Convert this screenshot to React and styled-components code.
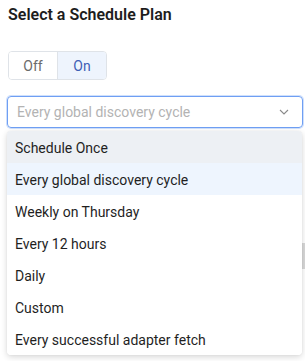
import React from 'react';
import styled, { createGlobalStyle } from 'styled-components';

const options = [
  'Schedule Once',
  'Every global discovery cycle',
  'Weekly on Thursday',
  'Every 12 hours',
  'Daily',
  'Custom',
  'Every successful adapter fetch',
];

function App() {
  return (
    <>
      <GlobalStyle />
      <Page>
        <Title>Select a Schedule Plan</Title>
        <Toggle>
          <ToggleButton>Off</ToggleButton>
          <ToggleButton active>On</ToggleButton>
        </Toggle>
        <Field>
          <Select>
            <Placeholder>Every global discovery cycle</Placeholder>
            <svg width="10" height="6" viewBox="0 0 10 6">
              <path d="M1 1l4 4 4-4" fill="none" stroke="#8a8a8a" strokeWidth="1.1" />
            </svg>
          </Select>
          <BehindBar />
          <Menu>
            {options.map((opt, i) => (
              <Option key={opt} hovered={i === 0} selected={i === 1}>
                {opt}
              </Option>
            ))}
          </Menu>
        </Field>
      </Page>
    </>
  );
}

const GlobalStyle = createGlobalStyle`
  body {
    margin: 0;
    background: #fff;
    font-family: Roboto, "Liberation Sans", sans-serif;
  }
`;

const Page = styled.div`
  width: 305px;
  height: 361px;
  padding: 5px 2px 0 7px;
  box-sizing: border-box;
  overflow: hidden;
`;

const Title = styled.div`
  font-size: 16px;
  font-weight: 600;
  color: #1d1d1d;
  line-height: 20px;
  padding-left: 1px;
`;

const Toggle = styled.div`
  display: inline-flex;
  margin: 26px 0 0 1px;
  border: 1px solid #dfe3e8;
  border-radius: 4px;
  overflow: hidden;
`;

const ToggleButton = styled.div`
  width: 48px;
  height: 27px;
  display: flex;
  align-items: center;
  justify-content: center;
  font-size: 14px;
  color: ${p => (p.active ? '#3f5fb5' : '#6b6b6b')};
  background: ${p => (p.active ? '#eef4fd' : '#fff')};
  border-left: ${p => (p.active ? '1px solid #dfe3e8' : 'none')};
`;

const Field = styled.div`
  position: relative;
  margin-top: 16px;
`;

const Select = styled.div`
  height: 32px;
  box-sizing: border-box;
  border: 1px solid #6f9ff3;
  border-radius: 4px;
  box-shadow: 0 0 0 1px #cfe0fc;
  display: flex;
  align-items: center;
  justify-content: space-between;
  padding: 0 13px 0 9px;
`;

const Placeholder = styled.span`
  font-size: 14px;
  color: #b3b3b3;
`;

const BehindBar = styled.div`
  position: absolute;
  right: -2px;
  top: 147px;
  width: 3px;
  height: 26px;
  background: #d8d8d8;
`;

const Menu = styled.div`
  position: absolute;
  top: 35px;
  left: 0;
  right: 1px;
  background: #fff;
  border-radius: 4px;
  box-shadow: 0 2px 6px rgba(0, 0, 0, 0.16), 0 0 1px rgba(0, 0, 0, 0.12);
  overflow: hidden;
`;

const Option = styled.div`
  height: 32px;
  display: flex;
  align-items: center;
  padding: 1px 0 0 8px;
  box-sizing: border-box;
  font-size: 14px;
  color: #1f1f1f;
  background: ${p => (p.hovered ? '#edf0f4' : p.selected ? '#eef5fe' : '#fff')};
`;

export default App;
